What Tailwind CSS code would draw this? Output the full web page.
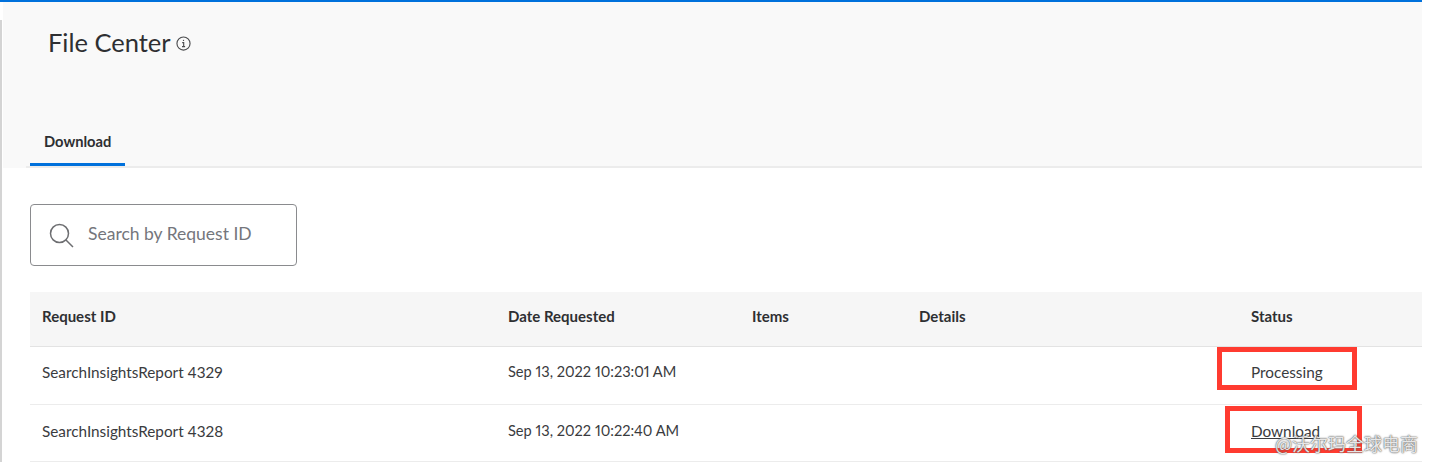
<!DOCTYPE html>
<html lang="en">
<head>
    <meta charset="UTF-8">
    <title>File Center</title>
    <script src="https://cdn.jsdelivr.net/npm/@tailwindcss/browser@4"></script>
</head>
<body class="bg-white h-[462px] overflow-hidden font-['Lato',sans-serif] text-[#2e2f32]">
    <div class="relative h-[462px] w-[1430px]">
        <div class="h-[2px] w-[1422px] bg-[#0071dc]"></div>

        <div class="flex h-[460px]">
            <!-- Left edge -->
            <div class="w-[3px] pt-[18px] shrink-0">
                <div class="h-full w-[2px] bg-[#d4d4d4]"></div>
            </div>

            <div class="w-[1419px] shrink-0">
                <!-- Header -->
                <div class="h-[166px] bg-[#f9f9f9]">
                    <div class="flex items-center gap-[5px] pl-[45px] pt-[22px]">
                        <h1 class="text-[25.5px] leading-[36px] font-normal">File Center</h1>
                        <svg class="w-[15px] h-[15px] mt-[2px]" viewBox="0 0 16 16" fill="none" stroke="#4a4b4e" stroke-width="1.2">
                            <circle cx="8" cy="8" r="7"/>
                            <path d="M6.6 7h1.6v4.2M6.4 11.3h3.3"/>
                            <circle cx="8" cy="4.7" r="0.7" fill="#4a4b4e" stroke="none"/>
                        </svg>
                    </div>
                    <div class="ml-[23px] pl-[4px] mt-[58px] flex border-b-2 border-[#ececec]">
                        <div class="h-[48px] w-[95px] border-b-[3px] border-[#0071dc] pl-[14px] pt-[9px] text-[14.7px] leading-[28px] font-bold">Download</div>
                    </div>
                </div>

                <!-- Search -->
                <div class="pl-[27px] pt-[36px]">
                    <div class="flex items-center h-[62px] w-[267px] border border-[#8a8b8e] rounded-[4px] pl-[18px] pb-[2px]">
                        <svg class="w-[25px] h-[25px] mt-[2px]" viewBox="0 0 25 25" fill="none" stroke="#6d6e71" stroke-width="1.5">
                            <circle cx="10.5" cy="10.5" r="9"/>
                            <path d="M17 17l7 7"/>
                        </svg>
                        <span class="ml-[14px] text-[17.5px] text-[#74767c]">Search by Request ID</span>
                    </div>
                </div>

                <!-- Table -->
                <div class="ml-[27px] mt-[26px] w-[1392px] text-[15.3px] text-[#3a3b3e] proportional-nums">
                    <div class="grid grid-cols-[466px_244px_167px_332px_171px] h-[55px] items-center bg-[#f6f6f6] border-b border-[#e3e3e3] font-bold text-[15px] text-[#2e2f32] pl-[12px] pb-[6px]">
                        <div>Request ID</div>
                        <div>Date Requested</div>
                        <div>Items</div>
                        <div>Details</div>
                        <div>Status</div>
                    </div>
                    <div class="grid grid-cols-[466px_244px_167px_332px_171px] h-[58px] items-center border-b border-[#ececec] pl-[12px] pb-[7px]">
                        <div>SearchInsightsReport 4329</div>
                        <div class="text-[14.6px]">Sep 13, 2022 10:23:01 AM</div>
                        <div></div>
                        <div></div>
                        <div>Processing</div>
                    </div>
                    <div class="grid grid-cols-[466px_244px_167px_332px_171px] h-[57px] items-center border-b border-[#ececec] pl-[12px] pb-[4px]">
                        <div>SearchInsightsReport 4328</div>
                        <div class="text-[14.6px]">Sep 13, 2022 10:22:40 AM</div>
                        <div></div>
                        <div></div>
                        <div><a href="#" class="underline">Download</a></div>
                    </div>
                </div>
            </div>
        </div>

        <!-- Annotation boxes and watermark, laid over the screenshot -->
        <div class="absolute left-[1217px] top-[347px] w-[140px] h-[43px] border-[5px] border-[#ff3b30]"></div>
        <div class="absolute left-[1225px] top-[406px] w-[137px] h-[47px] border-[5px] border-[#ff3b30]"></div>
        <div class="absolute left-[1275px] top-[431px] text-[18px] leading-[24px] text-white/85 font-['Noto_Sans_CJK_SC',sans-serif] [text-shadow:0_0_2px_#555,0_0_1px_#555]">@沃尔玛全球电商</div>
    </div>
</body>
</html>
